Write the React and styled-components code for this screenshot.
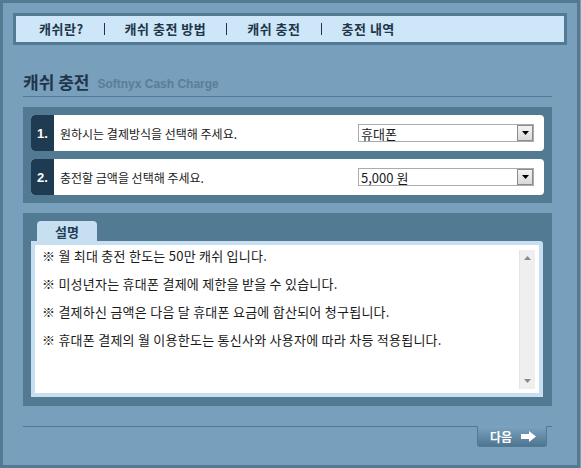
import React from "react";
import styled, { createGlobalStyle } from "styled-components";

const GlobalStyle = createGlobalStyle`
  body {
    margin: 0;
    background: #789fbb;
    font-family: "Noto Sans CJK KR", "Liberation Sans", sans-serif;
  }
`;

const Frame = styled.div`
  width: 580px;
  height: 468px;
  box-sizing: border-box;
  border: 3px solid #537a93;
  background: #789fbb;
  overflow: hidden;
`;

const Nav = styled.div`
  margin: 10px 0 0 10px;
  width: 554px;
  height: 32px;
  box-sizing: border-box;
  border: 3px solid #537a93;
  background: #cde6f8;
  display: flex;
  align-items: center;
  padding-left: 23px;
`;

const NavItem = styled.span`
  font-size: 13px;
  font-weight: 700;
  letter-spacing: 0.5px;
  color: #1f364a;
  line-height: 16px;
`;

const NavSep = styled.span`
  width: 1px;
  height: 12px;
  background: #1f364a;
  margin: 0 20px;
`;

const TitleBar = styled.div`
  margin: 24px 0 0 20px;
  width: 529px;
  height: 28px;
  box-sizing: border-box;
  border-bottom: 1px solid #537a93;
  display: flex;
  align-items: flex-end;
  padding: 0 0 4px 0;
`;

const Title = styled.h2`
  margin: 0;
  font-size: 17px;
  line-height: 20px;
  font-weight: 700;
  color: #1f364a;
`;

const SubTitle = styled.span`
  margin: 0 0 1px 8px;
  font-family: "Liberation Sans", Arial, sans-serif;
  font-size: 12px;
  font-weight: 700;
  color: #587e99;
`;

const StepPanel = styled.div`
  margin: 10px 0 0 20px;
  width: 529px;
  box-sizing: border-box;
  background: #537a93;
  padding: 8px;
  display: flex;
  flex-direction: column;
  gap: 8px;
`;

const StepRow = styled.div`
  height: 36px;
  display: flex;
  align-items: center;
  background: #fff;
  border-radius: 4px;
  overflow: hidden;
`;

const StepNum = styled.div`
  width: 23px;
  height: 100%;
  background: #1f3b51;
  color: #fff;
  font-family: "Liberation Sans", Arial, sans-serif;
  font-size: 13px;
  font-weight: 700;
  display: flex;
  align-items: center;
  justify-content: center;
`;

const StepText = styled.div`
  flex: 1;
  padding-left: 6px;
  font-size: 12px;
  color: #1a1a1a;
`;

const Select = styled.div`
  width: 176px;
  height: 18px;
  margin-right: 10px;
  box-sizing: border-box;
  border: 1px solid #a5acb2;
  display: flex;
  align-items: center;
  justify-content: space-between;
  padding-left: 2px;
  font-size: 13px;
  color: #1a1a1a;
  background: #fff;
`;

const SelectBtn = styled.div`
  width: 16px;
  height: 16px;
  box-sizing: border-box;
  border: 1px solid #8c8c8c;
  background: linear-gradient(#f4f4f4, #d9d9d9);
  display: flex;
  align-items: center;
  justify-content: center;
`;

const DescPanel = styled.div`
  margin: 10px 0 0 20px;
  width: 529px;
  height: 193px;
  box-sizing: border-box;
  background: #537a93;
  padding: 8px 9px 9px 8px;
`;

const Tab = styled.div`
  margin-left: 6px;
  width: 60px;
  height: 20px;
  background: #c6e0f2;
  border-radius: 4px 4px 0 0;
  color: #233d52;
  font-size: 13px;
  font-weight: 700;
  display: flex;
  align-items: center;
  justify-content: center;
`;

const DescBox = styled.div`
  height: 156px;
  box-sizing: border-box;
  border: 4px solid #c6e0f2;
  border-radius: 0 3px 0 0;
  background: #fff;
  display: flex;
`;

const DescList = styled.div`
  flex: 1;
  padding: 1px 0 0 7px;
  display: flex;
  flex-direction: column;
  gap: 8px;
`;

const DescLine = styled.p`
  margin: 0;
  font-size: 13px;
  letter-spacing: 0.25px;
  line-height: 20px;
  color: #1a1a1a;
`;

const Scrollbar = styled.div`
  width: 16px;
  margin: 5px 4px 4px 0;
  background: #efefef;
  border-left: 1px solid #e4e4e4;
  display: flex;
  flex-direction: column;
  justify-content: space-between;
  align-items: center;
  padding: 6px 0;
  box-sizing: border-box;
`;

const Footer = styled.div`
  margin: 20px 0 0 20px;
  width: 529px;
  display: flex;
  align-items: flex-start;
`;

const Rule = styled.div`
  height: 1px;
  background: #537a93;
  flex: ${(p) => (p.$grow ? 1 : "none")};
  width: ${(p) => (p.$grow ? "auto" : "5px")};
`;

const NextButton = styled.button`
  width: 70px;
  height: 21px;
  box-sizing: border-box;
  border: 1px solid #537a93;
  border-top: none;
  border-radius: 0 0 3px 3px;
  background: linear-gradient(#7ca3bf, #4f7691);
  color: #fff;
  font-family: "Noto Sans CJK KR", sans-serif;
  font-size: 12px;
  font-weight: 700;
  display: flex;
  align-items: center;
  justify-content: center;
  gap: 9px;
  padding: 0 0 0 2px;
  cursor: pointer;
`;

const Triangle = ({ up, color = "#000", w = 7, h = 4 }) => (
  <svg width={w} height={h} viewBox="0 0 7 4">
    <polygon points={up ? "0,4 7,4 3.5,0" : "0,0 7,0 3.5,4"} fill={color} />
  </svg>
);

const navItems = ["캐쉬란?", "캐쉬 충전 방법", "캐쉬 충전", "충전 내역"];

const steps = [
  { num: "1.", text: "원하시는 결제방식을 선택해 주세요.", value: "휴대폰" },
  { num: "2.", text: "충전할 금액을 선택해 주세요.", value: "5,000 원" },
];

const notes = [
  "※ 월 최대 충전 한도는 50만 캐쉬 입니다.",
  "※ 미성년자는 휴대폰 결제에 제한을 받을 수 있습니다.",
  "※ 결제하신 금액은 다음 달 휴대폰 요금에 합산되어 청구됩니다.",
  "※ 휴대폰 결제의 월 이용한도는 통신사와 사용자에 따라 차등 적용됩니다.",
];

export default function App() {
  return (
    <>
      <GlobalStyle />
      <Frame>
        <Nav>
          {navItems.map((item, i) => (
            <React.Fragment key={item}>
              {i > 0 && <NavSep />}
              <NavItem>{item}</NavItem>
            </React.Fragment>
          ))}
        </Nav>

        <TitleBar>
          <Title>캐쉬 충전</Title>
          <SubTitle>Softnyx Cash Charge</SubTitle>
        </TitleBar>

        <StepPanel>
          {steps.map((s) => (
            <StepRow key={s.num}>
              <StepNum>{s.num}</StepNum>
              <StepText>{s.text}</StepText>
              <Select>
                <span>{s.value}</span>
                <SelectBtn>
                  <Triangle />
                </SelectBtn>
              </Select>
            </StepRow>
          ))}
        </StepPanel>

        <DescPanel>
          <Tab>설명</Tab>
          <DescBox>
            <DescList>
              {notes.map((n) => (
                <DescLine key={n}>{n}</DescLine>
              ))}
            </DescList>
            <Scrollbar>
              <Triangle up color="#8a8a8a" />
              <Triangle color="#8a8a8a" />
            </Scrollbar>
          </DescBox>
        </DescPanel>

        <Footer>
          <Rule $grow />
          <NextButton>
            다음
            <svg width="15" height="11" viewBox="0 0 15 11">
              <polygon points="0,3 8,3 8,0 15,5.5 8,11 8,8 0,8" fill="#fff" />
            </svg>
          </NextButton>
          <Rule />
        </Footer>
      </Frame>
    </>
  );
}
